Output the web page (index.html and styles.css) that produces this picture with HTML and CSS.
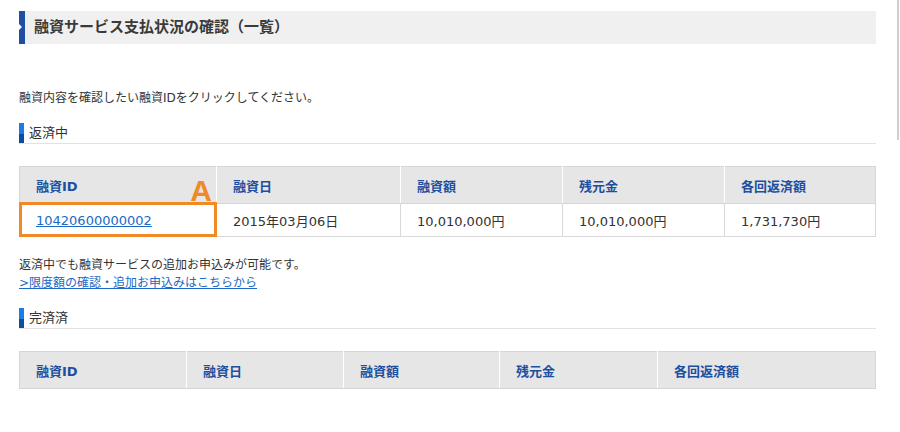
FILE: index.html
```html
<!DOCTYPE html>
<html lang="ja">
<head>
    <meta charset="UTF-8">
    <meta name="viewport" content="width=device-width, initial-scale=1.0">
    <title>融資サービス支払状況の確認（一覧）</title>
    <link rel="stylesheet" href="styles.css">
</head>
<body>
    <div class="edge-line"></div>
    <div class="container">
        <h1 class="page-title">融資サービス支払状況の確認（一覧）</h1>

        <p class="intro">融資内容を確認したい融資IDをクリックしてください。</p>

        <h2 class="section-title">返済中</h2>
        <table class="loan-table active-table">
            <thead>
                <tr>
                    <th>融資ID</th>
                    <th>融資日</th>
                    <th>融資額</th>
                    <th>残元金</th>
                    <th>各回返済額</th>
                </tr>
            </thead>
            <tbody>
                <tr>
                    <td class="id-cell">
                        <a href="#">10420600000002</a>
                        <span class="mark-box"></span>
                        <span class="mark-label">A</span>
                    </td>
                    <td>2015年03月06日</td>
                    <td>10,010,000円</td>
                    <td>10,010,000円</td>
                    <td>1,731,730円</td>
                </tr>
            </tbody>
        </table>

        <p class="note">返済中でも融資サービスの追加お申込みが可能です。<br>
            <a href="#">&gt;限度額の確認・追加お申込みはこちらから</a></p>

        <h2 class="section-title">完済済</h2>
        <table class="loan-table done-table">
            <thead>
                <tr>
                    <th>融資ID</th>
                    <th>融資日</th>
                    <th>融資額</th>
                    <th>残元金</th>
                    <th>各回返済額</th>
                </tr>
            </thead>
        </table>
    </div>
</body>
</html>
```

FILE: styles.css
```css
body {
    margin: 0;
    padding: 0;
    background-color: #fff;
    color: #333;
    font-family: 'DejaVu Sans', 'Noto Sans CJK JP', sans-serif;
    font-size: 12px;
}
.container {
    width: 857px;
    padding: 11px 0 0 19px;
}
.edge-line {
    position: absolute;
    top: 0;
    left: 897px;
    width: 2px;
    height: 140px;
    background-color: #cfcfcf;
}
.page-title {
    position: relative;
    margin: 0;
    height: 33px;
    line-height: 33px;
    padding-left: 9px;
    background-color: #f0f0f0;
    border-left: 6px solid #1e4fa3;
    font-size: 15px;
    font-weight: bold;
    color: #3a3a3a;
    box-sizing: border-box;
}
.page-title::before {
    content: '';
    position: absolute;
    left: -6px;
    top: 13px;
    border-left: 3px solid #fff;
    border-top: 3px solid transparent;
    border-bottom: 3px solid transparent;
}
.intro {
    margin: 45px 0 0;
    line-height: 18px;
}
.section-title {
    margin: 16px 0 0;
    height: 20px;
    line-height: 20px;
    padding-left: 10px;
    position: relative;
    font-size: 13px;
    font-weight: normal;
    color: #333;
    border-bottom: 1px solid #e2e2e2;
}
.section-title::before {
    content: '';
    position: absolute;
    left: 0;
    top: 0;
    width: 5px;
    height: 20px;
    background: linear-gradient(#1a7ce6 55%, #0b4d9e 55%);
}
.loan-table {
    width: 857px;
    margin-top: 22px;
    border-collapse: collapse;
    table-layout: fixed;
    font-size: 13px;
}
.loan-table th {
    height: 37px;
    padding: 0 0 0 16px;
    text-align: left;
    background-color: #e6e6e6;
    color: #1d4f9f;
    font-weight: bold;
    border: 1px solid #d6d6d6;
    border-left-color: #fff;
    border-right-color: #fff;
    box-sizing: border-box;
}
.loan-table th:first-child {
    border-left-color: #d6d6d6;
}
.loan-table th:last-child {
    border-right-color: #d6d6d6;
}
.loan-table td {
    height: 33px;
    padding: 0 0 0 16px;
    border: 1px solid #d9d9d9;
    color: #333;
    box-sizing: border-box;
}
.active-table th:nth-child(1) { width: 197px; }
.active-table th:nth-child(2) { width: 184px; }
.active-table th:nth-child(3) { width: 162px; }
.active-table th:nth-child(4) { width: 162px; }
.done-table th:nth-child(1) { width: 167px; }
.done-table th:nth-child(2) { width: 157px; }
.done-table th:nth-child(3) { width: 156px; }
.done-table th:nth-child(4) { width: 158px; }
.id-cell {
    position: relative;
}
.id-cell a,
.note a {
    color: #1a6ac6;
    text-decoration: underline;
}
.mark-box {
    position: absolute;
    left: -1px;
    top: -2px;
    right: -1px;
    bottom: -1px;
    border: 3px solid #ef8a26;
}
.mark-label {
    position: absolute;
    right: 4px;
    bottom: 100%;
    margin-bottom: 1px;
    font-family: 'Liberation Sans', sans-serif;
    font-size: 30px;
    font-weight: bold;
    line-height: 24px;
    color: #ef8a26;
}
.note {
    margin: 19px 0 0;
    line-height: 18px;
}
```
